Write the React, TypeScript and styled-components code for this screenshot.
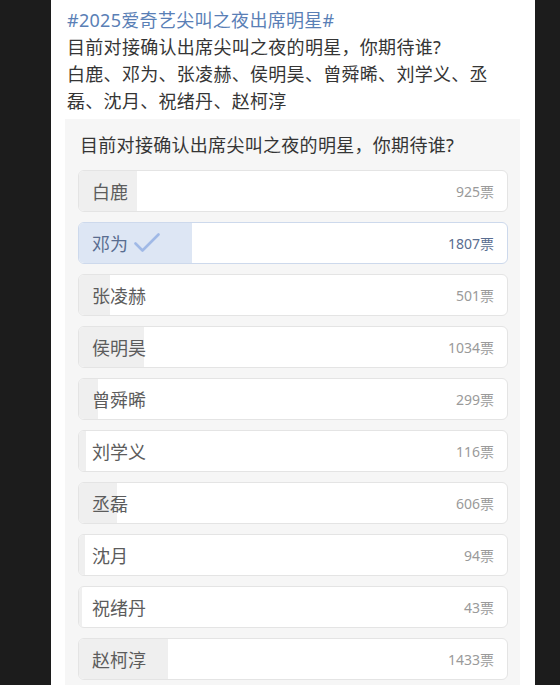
import styled, { createGlobalStyle } from "styled-components";

interface IPollOption {
  key: string;
  name: string;
  votes: number;
  selected?: boolean;
}

const options: IPollOption[] = [
  { key: "bailu", name: "白鹿", votes: 925 },
  { key: "dengwei", name: "邓为", votes: 1807, selected: true },
  { key: "zlh", name: "张凌赫", votes: 501 },
  { key: "hmh", name: "侯明昊", votes: 1034 },
  { key: "zsx", name: "曾舜晞", votes: 299 },
  { key: "lxy", name: "刘学义", votes: 116 },
  { key: "chenglei", name: "丞磊", votes: 606 },
  { key: "shenyue", name: "沈月", votes: 94 },
  { key: "zxd", name: "祝绪丹", votes: 43 },
  { key: "zkc", name: "赵柯淳", votes: 1433 },
];

const total = options.reduce((sum, o) => sum + o.votes, 0);

const CheckIcon = () => (
  <svg width="26" height="20" viewBox="0 0 26 20" fill="none">
    <path
      d="M1.5 10.5 L8.5 17.5 L24.5 1.5"
      stroke="#a0b9e6"
      strokeWidth="2.6"
      strokeLinecap="round"
      strokeLinejoin="round"
    />
  </svg>
);

const App = () => {
  return (
    <>
      <GlobalStyle />
      <PageStyled>
        <PostStyled>
          <PostTextStyled>
            <TopicStyled>#2025爱奇艺尖叫之夜出席明星#</TopicStyled>
            <br />
            目前对接确认出席尖叫之夜的明星，你期待谁?
            <br />
            白鹿、邓为、张凌赫、侯明昊、曾舜晞、刘学义、丞磊、沈月、祝绪丹、赵柯淳
          </PostTextStyled>
          <PollStyled>
            <PollTitleStyled>目前对接确认出席尖叫之夜的明星，你期待谁?</PollTitleStyled>
            <OptionListStyled>
              {options.map((option) => (
                <OptionStyled key={option.key} isSelected={!!option.selected}>
                  <OptionFillStyled
                    isSelected={!!option.selected}
                    style={{ width: `${(option.votes / total) * 100}%` }}
                  />
                  <OptionContentStyled>
                    <OptionNameStyled isSelected={!!option.selected}>
                      {option.name}
                      {option.selected && <CheckIcon />}
                    </OptionNameStyled>
                    <VoteCountStyled isSelected={!!option.selected}>
                      {option.votes}票
                    </VoteCountStyled>
                  </OptionContentStyled>
                </OptionStyled>
              ))}
            </OptionListStyled>
          </PollStyled>
        </PostStyled>
      </PageStyled>
    </>
  );
};

export default App;

const GlobalStyle = createGlobalStyle`
  body {
    margin: 0;
    background-color: #1c1c1c;
    font-family: "Noto Sans", "Noto Sans CJK SC", sans-serif;
  }
`;

const PageStyled = styled.div`
  width: 560px;
  height: 685px;
  overflow: hidden;
  display: flex;
`;

const PostStyled = styled.div`
  margin-left: 51px;
  width: 484px;
  background-color: #ffffff;
  display: flex;
  flex-direction: column;
`;

const PostTextStyled = styled.div`
  padding: 7px 34px 0 16px;
  font-size: 18px;
  letter-spacing: 0.3px;
  line-height: 27px;
  color: #353535;
`;

const TopicStyled = styled.span`
  color: #5a7fb6;
`;

const PollStyled = styled.div`
  margin: 4px 15px 0 14px;
  padding: 13px 12px 20px 13px;
  background-color: #f6f6f6;
  flex: 1;
`;

const PollTitleStyled = styled.div`
  font-size: 18px;
  letter-spacing: 0.3px;
  line-height: 26px;
  color: #353535;
  margin-left: 2px;
  margin-bottom: 12px;
`;

const OptionListStyled = styled.div`
  display: flex;
  flex-direction: column;
  gap: 10px;
`;

const OptionStyled = styled.div<{ isSelected: boolean }>`
  position: relative;
  height: 42px;
  box-sizing: border-box;
  border: 1px solid ${(props) => (props.isSelected ? "#cdd9ec" : "#e4e4e4")};
  border-radius: 6px;
  background-color: #ffffff;
  overflow: hidden;
`;

const OptionFillStyled = styled.div<{ isSelected: boolean }>`
  position: absolute;
  left: 0;
  top: 0;
  bottom: 0;
  background-color: ${(props) => (props.isSelected ? "#dde6f4" : "#efefef")};
`;

const OptionContentStyled = styled.div`
  position: relative;
  height: 100%;
  display: flex;
  align-items: center;
  justify-content: space-between;
  padding: 0 13px 0 13px;
`;

const OptionNameStyled = styled.div<{ isSelected: boolean }>`
  display: flex;
  align-items: center;
  gap: 6px;
  font-size: 18px;
  color: ${(props) => (props.isSelected ? "#596d90" : "#5c5c5c")};
`;

const VoteCountStyled = styled.div<{ isSelected: boolean }>`
  font-family: "Noto Sans", "Noto Sans CJK SC", sans-serif;
  font-size: 14px;
  color: ${(props) => (props.isSelected ? "#596d90" : "#9a9a9a")};
`;
